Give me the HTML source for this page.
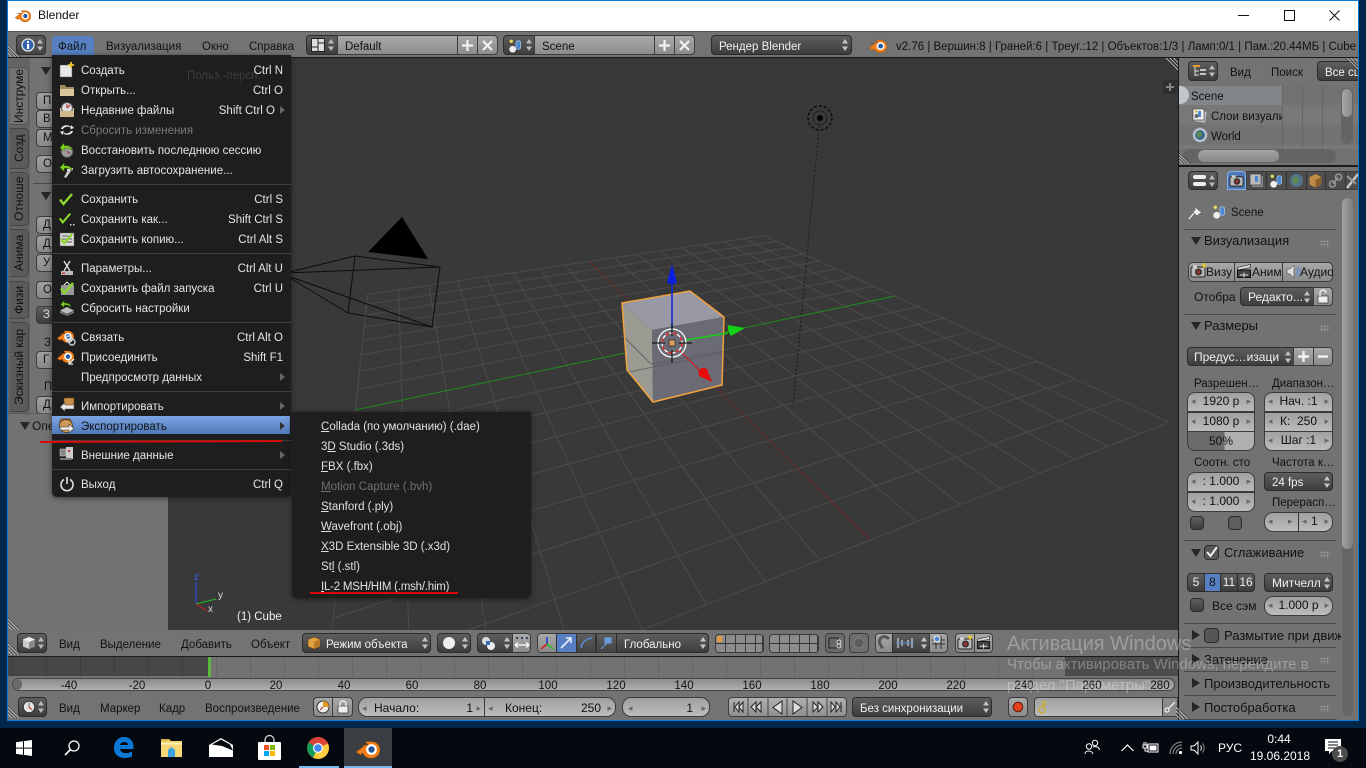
<!DOCTYPE html>
<html><head><meta charset="utf-8"><title>Blender</title>
<style>
html,body{margin:0;padding:0}
body{width:1366px;height:768px;overflow:hidden;background:#00264a;position:relative;font:11.5px "Liberation Sans","DejaVu Sans",sans-serif;color:#111}
.b{position:absolute;box-sizing:border-box}
.t{position:absolute;white-space:nowrap;line-height:18px;height:18px;color:#111}
.t[style*="font-size"]{line-height:14px;height:14px}
.w{color:#f0f0f0}
.lt{position:absolute;box-sizing:border-box;background:linear-gradient(#a8a8a8,#8c8c8c);border:1px solid #3c3c3c}
.dk{position:absolute;box-sizing:border-box;background:linear-gradient(#5e5e5e,#3d3d3d);border:1px solid #2c2c2c;border-radius:4px}
.nf{position:absolute;box-sizing:border-box;background:linear-gradient(#a0a0a0,#bcbcbc);border:1px solid #3c3c3c;text-align:center;line-height:17px;color:#111;white-space:nowrap;font-size:12px}
.nf i{position:absolute;top:0;font-style:normal;font-size:9px;color:#666}
.nf .l{left:3px}.nf .r{right:3px}
svg{position:absolute;overflow:visible}
.sep{position:absolute;height:1px;background:#3f3f3f;left:52px;width:239px}
.psep{position:absolute;height:1px;background:#4a4a4a;left:1184px;width:152px}
.m{position:absolute;left:81px;white-space:nowrap;line-height:20px;color:#e4e4e4}
.s{position:absolute;right:1083px;white-space:nowrap;line-height:20px;color:#e4e4e4}
.arr{position:absolute;left:280px;width:0;height:0;border-left:5px solid #666;border-top:4px solid transparent;border-bottom:4px solid transparent}
.sm{position:absolute;left:321px;white-space:nowrap;line-height:20px;color:#e0e0e0}
.tab{position:absolute;left:10px;width:19px;box-sizing:border-box;background:#5b5b5b;border:1px solid #454545;border-right:0;border-radius:5px 0 0 5px;writing-mode:vertical-rl;transform:rotate(180deg);text-align:center;line-height:18px;color:#111;white-space:nowrap;overflow:hidden;font-size:12px}
.sh{position:absolute;box-sizing:border-box;background:linear-gradient(#a0a0a0,#8a8a8a);border:1px solid #3c3c3c;border-radius:4px;left:36px;width:60px;height:18px;padding-left:6px;line-height:16px}
.tk{position:absolute;top:677px;line-height:18px;color:#111;transform:translateX(-50%)}
.td{position:absolute;width:0;height:0;border-left:5px solid transparent;border-right:5px solid transparent;border-top:8px solid #262626}
.tr{position:absolute;width:0;height:0;border-top:5px solid transparent;border-bottom:5px solid transparent;border-left:8px solid #262626}
</style></head>
<body>
<svg width="0" height="0" style="position:absolute">
<defs>
<symbol id="ud" viewBox="0 0 8 14"><path d="M4 1l3 4.500H1zM4 13L1 8.500h6z" fill="currentColor"/></symbol>
<symbol id="blend" viewBox="0 0 24 24"><path d="M0 16L8 10 2.500 9.500l9.500-.5L9 5.500h7.500a9 8.500 0 1 1-9.800 11.500L4.500 19z" fill="#ef7e18" stroke="#6b3208" stroke-width=".4"/><circle cx="15.500" cy="13.500" r="5.400" fill="#fff"/><circle cx="15.500" cy="13.500" r="3.200" fill="#25569a"/></symbol>
<symbol id="clock" viewBox="0 0 16 16"><circle cx="8" cy="8" r="6.500" fill="#e4e4e4" stroke="#333"/><path d="M8 8l3 3" stroke="#c22" stroke-width="1.300"/><path d="M8 8V3" stroke="#444"/></symbol>
<symbol id="check" viewBox="0 0 16 16"><path d="M2 8.500l3.500 4.500L14 3" fill="none" stroke="#8cd82a" stroke-width="2.400"/></symbol>
<symbol id="greenarrow" viewBox="0 0 16 16"><path d="M1 6l4.500-5v3c4 0 8 .5 9 5.500-2-2.500-5-3-9-3v3.500z" fill="#7fd020" stroke="#2f6a00" stroke-width=".5"/></symbol>
<symbol id="scene" viewBox="0 0 16 16"><circle cx="5" cy="12" r="3.600" fill="#eee"/><rect x="8.500" y="3" width="5" height="9" rx="2" fill="#4a86d4" stroke="#cfe0f5" stroke-width=".6"/><circle cx="3.500" cy="3.500" r="1.800" fill="#e8e060"/></symbol>
<symbol id="cam" viewBox="0 0 16 16"><rect x="1" y="4" width="14" height="10" rx="1.500" fill="#bbb" stroke="#222"/><rect x="3" y="2.500" width="4" height="2" fill="#ddd"/><circle cx="8.500" cy="9" r="3.500" fill="#333"/><circle cx="8.500" cy="9" r="1.800" fill="#a33"/></symbol>
<symbol id="clap" viewBox="0 0 16 16"><rect x="1.500" y="7" width="13" height="7.500" fill="#444" stroke="#111"/><path d="M1.500 4.500l13-3v3l-13 2.500z" fill="#ddd" stroke="#111" stroke-width=".6"/><path d="M4 12h8M8 9.500v5" stroke="#ddd"/></symbol>
<symbol id="hatch" viewBox="0 0 14 14"><path d="M1 0l13 13M5 0l9 9M9 0l5 5" stroke="#d8d8d8" stroke-width="1"/><path d="M0 0l14 14M4 0l10 10M8 0l6 6" stroke="#2a2a2a" stroke-width=".7"/></symbol>
<symbol id="hatchl" viewBox="0 0 14 14"><path d="M0 1l13 13M0 5l9 9M0 9l5 5" stroke="#d8d8d8" stroke-width="1"/><path d="M0 0l14 14M0 4l10 10M0 8l6 6" stroke="#2a2a2a" stroke-width=".7"/></symbol>
</defs></svg>

<!-- window frame -->
<div class="b" style="left:7px;top:0;width:1352px;height:721px;background:#727272;border:1px solid #0a78d4"></div>
<div class="b" style="left:8px;top:1px;width:1350px;height:30px;background:#fff"></div>
<svg style="left:15px;top:7px" width="16" height="16"><use href="#blend" width="16" height="16"/></svg>
<div class="t" style="left:38px;top:8px;font-size:12px;color:#111">Blender</div>
<div class="b" style="left:1238px;top:15px;width:11px;height:1px;background:#111"></div>
<div class="b" style="left:1284px;top:10px;width:11px;height:11px;border:1px solid #111"></div>
<svg style="left:1329px;top:10px" width="11" height="11"><path d="M.5 .5l10 10M10.500 .5l-10 10" stroke="#111"/></svg>

<!-- top header -->
<div class="b" style="left:8px;top:31px;width:1350px;height:26px;background:#737373;border-top:1px solid #555"></div>
<div class="b" style="left:8px;top:57px;width:1350px;height:1px;background:#1a1a1a"></div>
<svg style="left:8px;top:45px" width="12" height="12"><use href="#hatchl" width="12" height="12"/></svg>
<div class="dk" style="left:16px;top:35px;width:30px;height:20px;background:linear-gradient(#5a5a5a,#444)"></div>
<svg style="left:21px;top:38px" width="14" height="14"><circle cx="7" cy="7" r="6" fill="#2f62a8" stroke="#e6e6e6" stroke-width="1.300"/><circle cx="7" cy="4" r="1.200" fill="#fff"/><rect x="6" y="6" width="2.200" height="5" fill="#fff"/></svg>
<svg style="left:36px;top:38px;color:#b9b9b9" width="8" height="14"><use href="#ud" width="8" height="14"/></svg>
<div class="b" style="left:52px;top:36px;width:42px;height:20px;background:#5680c2;border-radius:4px 4px 0 0"></div>
<div class="t" style="left:58px;top:38px">Файл</div>
<div class="t" style="left:106px;top:38px">Визуализация</div>
<div class="t" style="left:202px;top:38px">Окно</div>
<div class="t" style="left:249px;top:38px">Справка</div>

<div class="dk" style="left:306px;top:35px;width:32px;height:20px;border-radius:4px 0 0 4px"></div>
<svg style="left:311px;top:38px" width="14" height="14"><rect x=".5" y=".5" width="13" height="13" fill="#ddd" stroke="#222"/><path d="M7 .5v13M.5 9h6.500M7 5h6.500" stroke="#222"/></svg>
<svg style="left:327px;top:38px;color:#b9b9b9" width="8" height="14"><use href="#ud" width="8" height="14"/></svg>
<div class="lt" style="left:337px;top:35px;width:121px;height:20px"></div>
<div class="t" style="left:345px;top:38px">Default</div>
<div class="lt" style="left:457px;top:35px;width:21px;height:20px"></div>
<div class="lt" style="left:477px;top:35px;width:21px;height:20px;border-radius:0 4px 4px 0"></div>
<svg style="left:462px;top:40px" width="11" height="11"><path d="M5.500 0v11M0 5.500h11" stroke="#f2f2f2" stroke-width="2.200"/></svg>
<svg style="left:482px;top:40px" width="11" height="11"><path d="M1 1l9 9M10 1L1 10" stroke="#f2f2f2" stroke-width="2.200"/></svg>

<div class="dk" style="left:503px;top:35px;width:32px;height:20px;border-radius:4px 0 0 4px"></div>
<svg style="left:508px;top:38px" width="15" height="15"><use href="#scene" width="15" height="15"/></svg>
<svg style="left:525px;top:38px;color:#b9b9b9" width="8" height="14"><use href="#ud" width="8" height="14"/></svg>
<div class="lt" style="left:534px;top:35px;width:121px;height:20px"></div>
<div class="t" style="left:542px;top:38px">Scene</div>
<div class="lt" style="left:654px;top:35px;width:21px;height:20px"></div>
<div class="lt" style="left:674px;top:35px;width:21px;height:20px;border-radius:0 4px 4px 0"></div>
<svg style="left:659px;top:40px" width="11" height="11"><path d="M5.500 0v11M0 5.500h11" stroke="#f2f2f2" stroke-width="2.200"/></svg>
<svg style="left:679px;top:40px" width="11" height="11"><path d="M1 1l9 9M10 1L1 10" stroke="#f2f2f2" stroke-width="2.200"/></svg>

<div class="dk" style="left:711px;top:35px;width:141px;height:20px"></div>
<div class="t w" style="left:719px;top:38px">Рендер Blender</div>
<svg style="left:841px;top:38px;color:#c4c4c4" width="8" height="14"><use href="#ud" width="8" height="14"/></svg>

<svg style="left:869px;top:36px" width="18" height="18"><use href="#blend" width="18" height="18"/></svg>
<div class="t" style="left:896px;top:38px;width:462px;overflow:hidden">v2.76 | Вершин:8 | Граней:6 | Треуг.:12 | Объектов:1/3 | Ламп:0/1 | Пам.:20.44МБ | Cube</div>

<!-- 3D viewport -->
<div class="b" style="left:168px;top:58px;width:1010px;height:575px;background:#393939"></div>
<svg style="left:168px;top:58px" width="1010" height="575" viewBox="168 58 1010 575">
 <defs><clipPath id="vc"><rect x="168" y="58" width="1010" height="575"/></clipPath></defs>
 <g clip-path="url(#vc)">
  <g id="grid" stroke="#4b4b4b" stroke-width="1"></g>
  <path d="M590 262L870 540" stroke="#642a2a" stroke-width="1"/>
  <path d="M355 410L895 296" stroke="#1f8a1f" stroke-width="1"/>
  <!-- lamp -->
  <path d="M820 118L793 405" stroke="#1c1c1c" stroke-width="1" stroke-dasharray="2 2"/>
  <circle cx="820" cy="118" r="12" fill="none" stroke="#0c0c0c" stroke-width="1.500" stroke-dasharray="3 2"/>
  <circle cx="820" cy="118" r="7" fill="none" stroke="#222"/>
  <circle cx="820" cy="118" r="3" fill="#000"/>
  <!-- camera -->
  <path d="M402 217L368 252L428 259z" fill="#000"/>
  <path d="M285 273L355 256L440 267L432 327L348 313L355 256M285 273L440 267M285 275L348 313M285 275L432 327" fill="none" stroke="#0c0c0c"/>
  <!-- cube -->
  <path d="M622 303L690 291L724 317L652 330z" fill="#9999a6"/>
  <path d="M622 303L652 330L653 402L627 370z" fill="#9b9b93"/>
  <path d="M652 330L724 317L722 385L653 402z" fill="#6b6b76"/>
  <path d="M625 338L651 364M629 372L722 353M651 364L723 351" stroke="#5a5a60" fill="none" stroke-width=".8"/>
  <path d="M622 303L690 291L724 317L722 385L653 402L627 370z" fill="none" stroke="#f2a33c" stroke-width="1.500"/>
  <!-- gizmo -->
  <path d="M672 283V330" stroke="#0a24d8" stroke-width="1.500"/>
  <path d="M672 264L677 283Q672 285 667 283z" fill="#0c1ee0"/>
  <path d="M686 340L728 333" stroke="#12d012" stroke-width="1.500"/>
  <path d="M745 328L728 325Q727 331 731 336z" fill="#12d012"/>
  <path d="M680 351L702 373" stroke="#e01010" stroke-width="1"/>
  <path d="M712 382L699 376Q697 369 703 368Q708 368 708 372z" fill="#e60a0a"/>
  <!-- 3d cursor -->
  <circle cx="672" cy="343" r="14" fill="none" stroke="#fff" stroke-width="1.300"/>
  <circle cx="672" cy="343" r="10" fill="none" stroke="#f22" stroke-width="1.300" stroke-dasharray="4 4"/>
  <circle cx="672" cy="343" r="10" fill="none" stroke="#fff" stroke-width="1.300" stroke-dasharray="4 4" stroke-dashoffset="4"/>
  <path d="M652 343H665M679 343H692M672 323V336M672 350V363" stroke="#000" stroke-width="1"/>
  <rect x="669" y="340" width="6" height="6" fill="#e0a060" stroke="#222" stroke-width=".7"/>
  <!-- mini axis -->
  <path d="M196 604V582" stroke="#2a50ff"/><path d="M196 604L216 599" stroke="#21c021"/><path d="M196 604L207 611" stroke="#d02020"/>
  <text x="194" y="580" font-family="Liberation Sans" font-size="10" fill="#3060ff">z</text>
  <text x="218" y="598" font-family="Liberation Sans" font-size="10" fill="#dcdcdc">y</text>
  <text x="208" y="612" font-family="Liberation Sans" font-size="10" fill="#dcdcdc">x</text>
 </g>
</svg>
<div class="t" style="left:237px;top:608px;color:#f0f0f0">(1) Cube</div>
<div class="b" style="left:1163px;top:80px;width:15px;height:14px;background:#2f2f2f;border-radius:3px 0 0 3px"></div>
<svg style="left:1166px;top:83px" width="8" height="8"><path d="M4 0v8M0 4h8" stroke="#888" stroke-width="2"/></svg>
<svg style="left:1165px;top:58px" width="13" height="13"><use href="#hatch" width="13" height="13"/></svg>

<!-- tool shelf -->
<div class="b" style="left:8px;top:58px;width:160px;height:575px;background:#727272"></div>
<div class="b" style="left:8px;top:58px;width:22px;height:356px;background:#646464"></div>
<div class="tab" style="top:67px;height:58px;background:#727272;border-color:#555">Инструме</div>
<div class="tab" style="top:128px;height:41px">Созд</div>
<div class="tab" style="top:172px;height:54px">Отноше</div>
<div class="tab" style="top:229px;height:48px">Анима</div>
<div class="tab" style="top:281px;height:38px">Физи</div>
<div class="tab" style="top:322px;height:90px">Эскизный кар</div>
<div class="td" style="left:41px;top:67px"></div>
<div class="sh" style="top:92px">П</div><div class="sh" style="top:110px">В</div><div class="sh" style="top:129px">М</div>
<div class="sh" style="top:155px">О</div>
<div class="b" style="left:33px;top:183px;width:30px;height:1px;background:#4a4a4a"></div>
<div class="td" style="left:41px;top:192px"></div>
<div class="sh" style="top:216px">Д</div><div class="sh" style="top:235px">Д</div><div class="sh" style="top:254px">У</div>
<div class="sh" style="top:281px">О</div>
<div class="sh" style="top:306px;background:linear-gradient(#5e5e5e,#3d3d3d);color:#ddd">З</div>
<div class="t" style="left:44px;top:334px">З</div>
<div class="sh" style="top:351px">Г</div>
<div class="t" style="left:44px;top:378px">П</div>
<div class="sh" style="top:396px">Д</div>
<div class="b" style="left:8px;top:413px;width:160px;height:1px;background:#5a5a5a"></div>
<div class="td" style="left:20px;top:422px"></div>
<div class="t" style="left:32px;top:419px;font-size:12px">Опе</div>
<svg style="left:8px;top:618px" width="12" height="12"><use href="#hatchl" width="12" height="12"/></svg>

<!-- menu -->
<div class="b" style="left:52px;top:55px;width:239px;height:442px;background:#1e1e1e;border-radius:0 0 5px 5px;box-shadow:0 1px 6px rgba(0,0,0,.5)"></div>
<div class="t" style="left:187px;top:67px;color:#3f3f3f">Польз.-персп.</div>
<div class="sep" style="top:184px"></div><div class="sep" style="top:253px"></div><div class="sep" style="top:322px"></div><div class="sep" style="top:391px"></div><div class="sep" style="top:440px"></div><div class="sep" style="top:469px"></div>
<div class="b" style="left:52px;top:416px;width:238px;height:18px;background:linear-gradient(#7ca5e6,#4f78b6)"></div>

<div class="m" style="top:61px">Создать</div><div class="s" style="top:61px">Ctrl N</div>
<div class="m" style="top:81px">Открыть...</div><div class="s" style="top:81px">Ctrl O</div>
<div class="m" style="top:101px">Недавние файлы</div><div class="s" style="top:101px;right:1091px">Shift Ctrl O</div><div class="arr" style="top:106px"></div>
<div class="m" style="top:121px;color:#7a7a7a">Сбросить изменения</div>
<div class="m" style="top:141px">Восстановить последнюю сессию</div>
<div class="m" style="top:161px">Загрузить автосохранение...</div>
<div class="m" style="top:190px">Сохранить</div><div class="s" style="top:190px">Ctrl S</div>
<div class="m" style="top:210px">Сохранить как...</div><div class="s" style="top:210px">Shift Ctrl S</div>
<div class="m" style="top:230px">Сохранить копию...</div><div class="s" style="top:230px">Ctrl Alt S</div>
<div class="m" style="top:259px">Параметры...</div><div class="s" style="top:259px">Ctrl Alt U</div>
<div class="m" style="top:279px">Сохранить файл запуска</div><div class="s" style="top:279px">Ctrl U</div>
<div class="m" style="top:299px">Сбросить настройки</div>
<div class="m" style="top:328px">Связать</div><div class="s" style="top:328px">Ctrl Alt O</div>
<div class="m" style="top:348px">Присоединить</div><div class="s" style="top:348px">Shift F1</div>
<div class="m" style="top:368px">Предпросмотр данных</div><div class="arr" style="top:373px"></div>
<div class="m" style="top:397px">Импортировать</div><div class="arr" style="top:402px"></div>
<div class="m" style="top:417px;color:#111">Экспортировать</div><div class="arr" style="top:422px;border-left-color:#333"></div>
<div class="m" style="top:446px">Внешние данные</div><div class="arr" style="top:451px"></div>
<div class="m" style="top:475px">Выход</div><div class="s" style="top:475px">Ctrl Q</div>

<!-- menu icons -->
<svg style="left:59px;top:62px" width="16" height="16"><path d="M1 3h9l3 3v9H1z" fill="#e8e8e8" stroke="#555" stroke-width=".5"/><path d="M12 0v6M9 3h6" stroke="#f0c828" stroke-width="1.800"/></svg>
<svg style="left:59px;top:82px" width="16" height="16"><path d="M1 3h5l1 2h8v9H1z" fill="#a08c5e"/><path d="M1 7h14v7H1z" fill="#d8c69a"/></svg>
<svg style="left:59px;top:102px" width="16" height="16"><path d="M1 6h14v9H1z" fill="#d8c69a"/><circle cx="8" cy="6" r="5.500" fill="#ddd" stroke="#555"/><path d="M8 6l3-3M8 6V2" stroke="#a22"/><path d="M1 9h14v6H1z" fill="#cdb98b"/></svg>
<svg style="left:59px;top:122px" width="16" height="16"><path d="M2 7c1-4 7-5 10-2V3l3 3-4 1.500 1-1.500c-2-2-6-2-8 1zM14 9c-1 4-7 5-10 2v2l-3-3 4-1.500L4 10c2 2 6 2 8-1z" fill="#eee"/></svg>
<svg style="left:59px;top:142px" width="16" height="16"><circle cx="8" cy="9.500" r="6" fill="#9a9a9a" stroke="#444"/><path d="M8 9.500l3 2" stroke="#a22"/><use href="#greenarrow" width="15" height="15"/></svg>
<svg style="left:59px;top:162px" width="16" height="16"><path d="M5 15l4-7 3 1-5 7z" fill="#ccc"/><path d="M8 8l6-1" stroke="#ddd" stroke-width="2"/><use href="#greenarrow" width="15" height="15"/></svg>
<svg style="left:58px;top:191px" width="16" height="16"><use href="#check" width="16" height="16"/></svg>
<svg style="left:58px;top:211px" width="16" height="16"><use href="#check" width="14" height="14"/><path d="M12 13h1.500v1.500H12zM15 13h1.500v1.500H15z" fill="#ddd"/></svg>
<svg style="left:59px;top:231px" width="16" height="16"><rect x="1" y="2" width="14" height="13" fill="#ddd" stroke="#555" stroke-width=".5"/><path d="M3 5h10M3 8h10M3 11h10" stroke="#555"/><use href="#check" width="15" height="15"/></svg>
<svg style="left:59px;top:260px" width="16" height="16"><rect x="2" y="11" width="12" height="4" fill="#bbb"/><path d="M5 1l3 5 3-5M5 11l3-5 3 5" fill="none" stroke="#ddd" stroke-width="1.400"/><rect x="3" y="12.500" width="3" height="1.300" fill="#c33"/></svg>
<svg style="left:59px;top:280px" width="16" height="16"><rect x="2" y="5" width="13" height="10" fill="#999"/><path d="M5 5l3-3 3 3" fill="none" stroke="#ddd"/><use href="#check" width="16" height="16"/></svg>
<svg style="left:59px;top:300px" width="16" height="16"><path d="M8 7l7 3.500-7 3.500-7-3.500z" fill="#bbb"/><path d="M1 11l7 3.500L15 11v2l-7 3-7-3z" fill="#777"/><use href="#greenarrow" width="14" height="12"/></svg>
<svg style="left:57px;top:327px" width="19" height="19"><use href="#blend" width="17" height="17"/><circle cx="12" cy="12" r="3" fill="none" stroke="#ddd" stroke-width="1.400"/><circle cx="15" cy="15" r="3" fill="none" stroke="#bcd" stroke-width="1.400"/></svg>
<svg style="left:57px;top:347px" width="19" height="19"><use href="#blend" width="17" height="17"/><path d="M17 12l-5 5M12 13v4h4" fill="none" stroke="#eee" stroke-width="1.300"/></svg>
<svg style="left:59px;top:397px" width="16" height="16"><rect x="5" y="1" width="10" height="10" fill="#c98f4a" stroke="#6b4312" stroke-width=".6"/><path d="M15 8H6V5.500L1 10l5 4.500V12h9z" fill="#e8e8e8" stroke="#444" stroke-width=".6"/></svg>
<svg style="left:58px;top:417px" width="18" height="18"><rect x="2" y="2" width="11" height="10" rx="2" fill="#c98f4a" stroke="#4d2e08" stroke-width=".7"/><circle cx="8" cy="9" r="6.500" fill="#ce9a5a" stroke="#4d2e08" stroke-width=".7"/><path d="M2 10h9V7l5 4.500L11 16v-3H2z" fill="#eee" stroke="#333" stroke-width=".6"/></svg>
<svg style="left:59px;top:446px" width="16" height="16"><rect x="1" y="3" width="6" height="7" fill="#888" stroke="#ccc" stroke-width=".5"/><rect x="7" y="1" width="7" height="12" fill="#ccc"/><path d="M1 12h12v2H1z" fill="#777"/><circle cx="10" cy="5" r="1.200" fill="#c33"/></svg>
<svg style="left:59px;top:476px" width="16" height="16"><path d="M5 3.500a6 6 0 1 0 6 0" fill="none" stroke="#ddd" stroke-width="1.600"/><path d="M8 1v7" stroke="#ddd" stroke-width="1.600"/></svg>

<!-- submenu -->
<div class="b" style="left:292px;top:412px;width:239px;height:186px;background:#1e1e1e;border-radius:0 0 5px 5px;box-shadow:0 1px 6px rgba(0,0,0,.5)"></div>
<div class="sm" style="top:417px"><u>C</u>ollada (по умолчанию) (.dae)</div>
<div class="sm" style="top:437px">3<u>D</u> Studio (.3ds)</div>
<div class="sm" style="top:457px"><u>F</u>BX (.fbx)</div>
<div class="sm" style="top:477px;color:#707070"><u>M</u>otion Capture (.bvh)</div>
<div class="sm" style="top:497px"><u>S</u>tanford (.ply)</div>
<div class="sm" style="top:517px"><u>W</u>avefront (.obj)</div>
<div class="sm" style="top:537px"><u>X</u>3D Extensible 3D (.x3d)</div>
<div class="sm" style="top:557px">St<u>l</u> (.stl)</div>
<div class="sm" style="top:577px;letter-spacing:-.22px"><u>I</u>L-2 MSH/HIM (.msh/.him)</div>
<!-- red marks -->
<svg style="left:0;top:0" width="600" height="620"><path d="M40 442L282 441" stroke="#d80a0a" stroke-width="2"/><path d="M310 593L458 593" stroke="#d80a0a" stroke-width="2"/></svg>

<!-- viewport header -->
<div class="b" style="left:8px;top:630px;width:1170px;height:26px;background:#737373"></div>
<div class="b" style="left:8px;top:656px;width:1170px;height:1px;background:#1a1a1a"></div>
<svg style="left:8px;top:643px" width="12" height="12"><use href="#hatchl" width="12" height="12"/></svg>
<div class="dk" style="left:17px;top:633px;width:30px;height:20px"></div>
<svg style="left:22px;top:636px" width="14" height="14"><path d="M7 1l6 2.500v7L7 13 1 10.500v-7z" fill="#ccc"/><path d="M7 6l6-2.500v7L7 13z" fill="#888"/><path d="M1 3.500L7 1l6 2.500L7 6z" fill="#eee"/></svg>
<svg style="left:37px;top:636px;color:#b9b9b9" width="8" height="14"><use href="#ud" width="8" height="14"/></svg>
<div class="t" style="left:59px;top:636px">Вид</div>
<div class="t" style="left:100px;top:636px">Выделение</div>
<div class="t" style="left:181px;top:636px">Добавить</div>
<div class="t" style="left:251px;top:636px">Объект</div>
<div class="dk" style="left:302px;top:633px;width:129px;height:20px"></div>
<svg style="left:307px;top:636px" width="14" height="14"><path d="M7 1l6 2.500v7L7 13 1 10.500v-7z" fill="#e0a040" stroke="#5b3b0d" stroke-width=".5"/><path d="M7 6l6-2.500v7L7 13z" fill="#b9782a"/></svg>
<div class="t w" style="left:326px;top:636px">Режим объекта</div>
<svg style="left:421px;top:636px;color:#c4c4c4" width="8" height="14"><use href="#ud" width="8" height="14"/></svg>
<div class="dk" style="left:437px;top:633px;width:34px;height:20px"></div>
<svg style="left:442px;top:636px" width="14" height="14"><circle cx="7" cy="7" r="6" fill="#eee"/></svg>
<svg style="left:461px;top:636px;color:#c4c4c4" width="8" height="14"><use href="#ud" width="8" height="14"/></svg>
<div class="dk" style="left:477px;top:633px;width:36px;height:20px;border-radius:4px 0 0 4px"></div>
<svg style="left:481px;top:636px" width="15" height="15"><circle cx="5" cy="5" r="4" fill="#ddd"/><circle cx="10" cy="10" r="4" fill="#eee"/><rect x="5" y="5" width="4" height="4" fill="#3a6bc0"/></svg>
<svg style="left:503px;top:636px;color:#c4c4c4" width="8" height="14"><use href="#ud" width="8" height="14"/></svg>
<div class="lt" style="left:512px;top:633px;width:19px;height:20px;border-radius:0 4px 4px 0"></div>
<svg style="left:514px;top:636px" width="16" height="14"><path d="M2 1h2v2H2zM7 1h2v2H7zM12 1h2v2h-2z" fill="#345"/><path d="M1 9h14M1 9l3-2.500M1 9l3 2.500M15 9l-3-2.500M15 9l-3 2.500" stroke="#fff" fill="none" stroke-width="1.200"/></svg>

<div class="lt" style="left:537px;top:633px;width:20px;height:20px;border-radius:4px 0 0 4px"></div>
<svg style="left:539px;top:636px" width="16" height="15"><path d="M8 8V1" stroke="#1b3fd0" stroke-width="1.600"/><path d="M8 8l-6 5" stroke="#d02020" stroke-width="1.600"/><path d="M8 8l6 5" stroke="#22c022" stroke-width="1.600"/></svg>
<div class="b" style="left:556px;top:633px;width:21px;height:20px;background:#5680c2;border:1px solid #333"></div>
<svg style="left:559px;top:636px" width="14" height="14"><path d="M2 12L11 3M7 2h5v5" stroke="#eef" fill="none" stroke-width="1.600"/></svg>
<div class="b" style="left:576px;top:633px;width:20px;height:20px;background:linear-gradient(#5e5e5e,#444);border:1px solid #333"></div>
<svg style="left:579px;top:636px" width="14" height="14"><path d="M2 12C3 6 7 3 13 2" stroke="#5a8ad0" fill="none" stroke-width="1.600"/></svg>
<div class="b" style="left:596px;top:633px;width:21px;height:20px;background:linear-gradient(#5e5e5e,#444);border:1px solid #333"></div>
<svg style="left:599px;top:636px" width="14" height="14"><path d="M2 13l6-6M6 2h6v5H6z" stroke="#6a9ade" fill="#6a9ade" stroke-width="1.200"/></svg>
<div class="dk" style="left:616px;top:633px;width:93px;height:20px;border-radius:0 4px 4px 0"></div>
<div class="t w" style="left:624px;top:636px">Глобально</div>
<svg style="left:699px;top:636px;color:#c4c4c4" width="8" height="14"><use href="#ud" width="8" height="14"/></svg>
<div class="b" style="left:715px;top:634px;width:49px;height:19px;border:1px solid #3a3a3a;border-radius:4px;background:linear-gradient(#333,#333) 0 8px/100% 1px no-repeat,repeating-linear-gradient(90deg,#3a3a3a 0 1px,transparent 1px 10px) -1px 0,#8c8c8c"></div>
<div class="b" style="left:717px;top:636px;width:5px;height:6px;background:#e09a40"></div>
<div class="b" style="left:769px;top:634px;width:50px;height:19px;border:1px solid #3a3a3a;border-radius:4px;background:linear-gradient(#333,#333) 0 8px/100% 1px no-repeat,repeating-linear-gradient(90deg,#3a3a3a 0 1px,transparent 1px 10px) -1px 0,#8c8c8c"></div>
<div class="lt" style="left:825px;top:633px;width:20px;height:20px;border-radius:4px;background:#6a6a6a"></div>
<svg style="left:828px;top:637px" width="15" height="13"><rect x="1" y="1" width="9" height="10" fill="none" stroke="#222"/><circle cx="11" cy="5" r="2" fill="none" stroke="#ddd"/><circle cx="11" cy="9" r="2" fill="none" stroke="#ddd"/></svg>
<div class="lt" style="left:849px;top:633px;width:20px;height:20px;border-radius:4px;background:#6e6e6e"></div>
<svg style="left:853px;top:637px" width="12" height="12"><circle cx="6" cy="6" r="5" fill="#5c5c5c" stroke="#7e7e7e"/></svg>
<div class="lt" style="left:875px;top:633px;width:18px;height:20px;border-radius:4px 0 0 4px"></div>
<svg style="left:877px;top:636px" width="14" height="14"><path d="M3 11V6a5 5 0 0 1 10 0" fill="none" stroke="#555" stroke-width="3" transform="rotate(-30 7 7)"/></svg>
<div class="dk" style="left:892px;top:633px;width:38px;height:20px;border-radius:0"></div>
<svg style="left:896px;top:637px" width="18" height="12"><path d="M2 1v10M6 3v6M12 3v6M16 1v10" stroke="#bcd" stroke-width="1.300"/><path d="M0 6h18" stroke="#5b8bd0"/></svg>
<svg style="left:920px;top:636px;color:#c4c4c4" width="8" height="14"><use href="#ud" width="8" height="14"/></svg>
<div class="lt" style="left:929px;top:633px;width:19px;height:20px;border-radius:0 4px 4px 0"></div>
<svg style="left:931px;top:635px" width="15" height="15"><path d="M1 5h13M1 9h13M5 1v13M10 1v13" stroke="#333"/><circle cx="6" cy="4" r="3" fill="#4a86d4" stroke="#fff"/></svg>
<div class="lt" style="left:955px;top:633px;width:20px;height:20px;border-radius:4px 0 0 4px"></div>
<svg style="left:957px;top:635px" width="16" height="16"><use href="#cam" width="16" height="16"/><path d="M13 0v5M10.500 2.500h5" stroke="#f0c828" stroke-width="1.500"/></svg>
<div class="lt" style="left:974px;top:633px;width:19px;height:20px;border-radius:0 4px 4px 0"></div>
<svg style="left:976px;top:635px" width="15" height="15"><use href="#clap" width="15" height="15"/></svg>

<!-- timeline -->
<div class="b" style="left:8px;top:657px;width:1170px;height:20px;background:repeating-linear-gradient(90deg,#666 0 1px,transparent 1px 34px) 4px 0,#727272"></div>
<div class="b" style="left:8px;top:657px;width:200px;height:19px;background:repeating-linear-gradient(90deg,#3d3d3d 0 1px,transparent 1px 34px) 4px 0,#474747"></div>
<div class="b" style="left:1065px;top:657px;width:113px;height:19px;background:#4c4c4c"></div>
<div class="b" style="left:208px;top:657px;width:3px;height:20px;background:#5cb83c"></div>
<div class="b" style="left:12px;top:678px;width:1163px;height:13px;border-radius:7px;border:1px solid #444;background:linear-gradient(#8c8c8c,#b0b0b0)"></div>
<div class="b" style="left:13px;top:679px;width:9px;height:11px;border-radius:6px;background:#6a6a6a"></div>
<div class="tk" style="left:69px">-40</div><div class="tk" style="left:137px">-20</div><div class="tk" style="left:208px">0</div><div class="tk" style="left:276px">20</div><div class="tk" style="left:344px">40</div><div class="tk" style="left:412px">60</div><div class="tk" style="left:480px">80</div><div class="tk" style="left:548px">100</div><div class="tk" style="left:616px">120</div><div class="tk" style="left:684px">140</div><div class="tk" style="left:752px">160</div><div class="tk" style="left:820px">180</div><div class="tk" style="left:888px">200</div><div class="tk" style="left:956px">220</div><div class="tk" style="left:1024px">240</div><div class="tk" style="left:1092px">260</div><div class="tk" style="left:1160px">280</div>

<!-- timeline header -->
<div class="b" style="left:8px;top:691px;width:1170px;height:29px;background:#737373"></div>
<svg style="left:8px;top:706px" width="12" height="12"><use href="#hatchl" width="12" height="12"/></svg>
<div class="dk" style="left:18px;top:697px;width:29px;height:20px"></div>
<svg style="left:22px;top:700px" width="14" height="14"><use href="#clock" width="14" height="14"/></svg>
<svg style="left:37px;top:700px;color:#b9b9b9" width="8" height="14"><use href="#ud" width="8" height="14"/></svg>
<div class="t" style="left:59px;top:700px">Вид</div>
<div class="t" style="left:100px;top:700px">Маркер</div>
<div class="t" style="left:159px;top:700px">Кадр</div>
<div class="t" style="left:205px;top:700px">Воспроизведение</div>
<div class="lt" style="left:313px;top:697px;width:20px;height:20px;border-radius:4px 0 0 4px"></div>
<svg style="left:316px;top:700px" width="14" height="14"><circle cx="7" cy="7" r="6" fill="#eee" stroke="#333"/><path d="M7 7V1a6 6 0 0 1 6 6z" fill="#e89a20"/><path d="M7 7l-3 3" stroke="#a22"/></svg>
<div class="lt" style="left:332px;top:697px;width:21px;height:20px;border-radius:0 4px 4px 0"></div>
<svg style="left:337px;top:700px" width="12" height="14"><rect x="1" y="6" width="10" height="7" fill="#eee" stroke="#333" stroke-width=".7"/><path d="M3 6V4a3 3 0 0 1 6 0v2" fill="none" stroke="#eee" stroke-width="1.400"/></svg>
<div class="nf" style="left:358px;top:697px;width:127px;height:20px;border-radius:9px 0 0 9px;text-align:left;padding-left:15px;line-height:20px">Начало:<span style="position:absolute;right:11px">1</span><i class="l">◂</i><i class="r">▸</i></div>
<div class="nf" style="left:484px;top:697px;width:132px;height:20px;border-radius:0 9px 9px 0;text-align:left;padding-left:20px;line-height:20px">Конец:<span style="position:absolute;right:14px">250</span><i class="l">◂</i><i class="r">▸</i></div>
<div class="nf" style="left:622px;top:697px;width:88px;height:20px;border-radius:9px;line-height:20px;text-align:right;padding-right:16px">1<i class="l" style="left:5px">◂</i><i class="r">▸</i></div>
<div class="lt" style="left:728px;top:697px;width:119px;height:20px;border-radius:4px;background:linear-gradient(#b0b0b0,#909090)"></div>
<svg style="left:728px;top:697px" width="119" height="20"><path d="M20 0v20M40 0v20M59 0v20M79 0v20M99 0v20" stroke="#444"/><g fill="#ddd" stroke="#222"><path d="M6 5v10M15 5v10l-4-5zM11 5v10l-4-5z" /><path d="M33 5v10l-5-5zM28 5v10l-5-5z"/><path d="M54 4v13l-9-6.500z"/><path d="M65 4v13l9-6.500z"/><path d="M85 5v10l5-5zM90 5v10l5-5z"/><path d="M113 5v10M103 5v10l4-5zM108 5v10l4-5z"/></g></svg>
<div class="dk" style="left:852px;top:697px;width:140px;height:20px"></div>
<div class="t w" style="left:860px;top:700px">Без синхронизации</div>
<svg style="left:982px;top:700px;color:#c4c4c4" width="8" height="14"><use href="#ud" width="8" height="14"/></svg>
<div class="lt" style="left:1008px;top:697px;width:20px;height:20px;border-radius:4px"></div>
<svg style="left:1012px;top:701px" width="12" height="12"><circle cx="6" cy="6" r="4.800" fill="#e0401a" stroke="#5a1a08"/></svg>
<div class="lt" style="left:1034px;top:697px;width:129px;height:20px;border-radius:4px 0 0 4px;background:linear-gradient(#a0a0a0,#bcbcbc)"></div>
<svg style="left:1037px;top:699px" width="16" height="16"><circle cx="5" cy="11" r="3" fill="none" stroke="#c9b040" stroke-width="1.600"/><path d="M6 9V2M6 3h4M6 6h3" stroke="#c9b040" stroke-width="1.600" fill="none"/></svg>
<div class="lt" style="left:1162px;top:697px;width:16px;height:20px;background:#8a8a8a"></div>
<svg style="left:1164px;top:701px" width="12" height="12"><circle cx="3" cy="9" r="2" fill="none" stroke="#eee" stroke-width="1.300"/><path d="M4.500 7.500L11 1" stroke="#eee" stroke-width="1.300"/></svg>

<!-- outliner -->
<div class="b" style="left:1178px;top:58px;width:1px;height:662px;background:#1a1a1a"></div>
<div class="b" style="left:1179px;top:58px;width:179px;height:27px;background:#737373"></div>
<div class="dk" style="left:1188px;top:61px;width:30px;height:20px"></div>
<svg style="left:1192px;top:64px" width="15" height="14"><path d="M1 1h7v2H1z" fill="#e09a30"/><path d="M3 3v9M3 7h4M3 11h4" stroke="#ddd"/><path d="M8 6h6M8 10h6" stroke="#eee" stroke-width="1.600"/></svg>
<svg style="left:1208px;top:64px;color:#b9b9b9" width="8" height="14"><use href="#ud" width="8" height="14"/></svg>
<div class="t" style="left:1230px;top:64px">Вид</div>
<div class="t" style="left:1271px;top:64px">Поиск</div>
<div class="dk" style="left:1317px;top:61px;width:41px;height:20px;border-right:0;border-radius:4px 0 0 4px"></div>
<div class="t w" style="left:1325px;top:64px;width:33px;overflow:hidden">Все сцены</div>
<div class="b" style="left:1179px;top:85px;width:179px;height:81px;background:#727272"></div>
<div class="b" style="left:1179px;top:105px;width:179px;height:20px;background:#787878"></div>
<div class="b" style="left:1179px;top:145px;width:179px;height:4px;background:#787878"></div>
<div class="b" style="left:1179px;top:86px;width:103px;height:19px;background:#80868a"></div>
<div class="b" style="left:1179px;top:86px;width:10px;height:18px;background:#c0c6ca;border-radius:0 9px 9px 0"></div>
<div class="b" style="left:1282px;top:85px;width:1px;height:64px;background:#666"></div><div class="b" style="left:1302px;top:85px;width:1px;height:64px;background:#666"></div><div class="b" style="left:1322px;top:85px;width:1px;height:64px;background:#666"></div>
<div class="t" style="left:1191px;top:88px">Scene</div>
<svg style="left:1192px;top:108px" width="15" height="15"><rect x="3" y="3" width="11" height="11" fill="#bbb" transform="rotate(8 8 8)"/><rect x="1" y="1" width="11" height="11" fill="#eee" stroke="#333" stroke-width=".6"/><rect x="6" y="3" width="3" height="6" fill="#4a86d4"/><circle cx="4.500" cy="8" r="2" fill="#666"/><circle cx="4" cy="3.500" r="1.200" fill="#c9b040"/></svg>
<div class="t" style="left:1211px;top:108px;width:71px;overflow:hidden">Слои визуализации</div>
<svg style="left:1192px;top:127px" width="16" height="16"><circle cx="8" cy="8" r="7" fill="#c8ced8" stroke="#9a9fb0"/><circle cx="8" cy="8" r="5" fill="#3a6a90"/><path d="M5 5c2-1 5 0 5 2s-2 2-3 4c-2 0-3-3-2-6z" fill="#5c8a4a"/></svg>
<div class="t" style="left:1211px;top:128px">World</div>
<div class="b" style="left:1183px;top:149px;width:153px;height:14px;border-radius:7px;background:#646464"></div>
<div class="b" style="left:1198px;top:150px;width:81px;height:12px;border-radius:6px;background:linear-gradient(#a4a4a4,#888)"></div>
<div class="b" style="left:1341px;top:88px;width:12px;height:56px;border-radius:6px;background:#646464"></div>
<div class="b" style="left:1342px;top:89px;width:10px;height:28px;border-radius:5px;background:linear-gradient(90deg,#a8a8a8,#8a8a8a)"></div>
<div class="b" style="left:1179px;top:165px;width:179px;height:2px;background:#1a1a1a"></div>
<svg style="left:1346px;top:58px" width="12" height="12"><use href="#hatch" width="12" height="12"/></svg>
<svg style="left:1179px;top:153px" width="11" height="11"><use href="#hatchl" width="11" height="11"/></svg>

<!-- properties -->
<div class="b" style="left:1179px;top:167px;width:179px;height:553px;background:#727272"></div>
<div class="dk" style="left:1188px;top:171px;width:30px;height:19px"></div>
<svg style="left:1192px;top:174px" width="15" height="13"><rect x="1" y="1" width="13" height="4" rx="2" fill="#eee"/><rect x="1" y="8" width="13" height="4" rx="2" fill="#eee"/></svg>
<svg style="left:1208px;top:174px;color:#b9b9b9" width="8" height="14"><use href="#ud" width="8" height="14"/></svg>
<div class="b" style="left:1227px;top:171px;width:19px;height:19px;background:#4d77b5;border:1px solid #82aee8;border-radius:4px 4px 0 0"></div>
<div class="b" style="left:1246px;top:171px;width:112px;height:19px;background:#4d4d4d;border:1px solid #3a3a3a;border-right:0"></div>
<div class="b" style="left:1266px;top:171px;width:1px;height:19px;background:#333"></div><div class="b" style="left:1286px;top:171px;width:1px;height:19px;background:#333"></div><div class="b" style="left:1306px;top:171px;width:1px;height:19px;background:#333"></div><div class="b" style="left:1325px;top:171px;width:1px;height:19px;background:#333"></div><div class="b" style="left:1345px;top:171px;width:1px;height:19px;background:#333"></div>
<svg style="left:1229px;top:173px" width="15" height="15"><use href="#cam" width="15" height="15"/></svg>
<svg style="left:1249px;top:173px" width="15" height="15"><rect x="3" y="3" width="11" height="11" fill="#888"/><rect x="1" y="1" width="11" height="11" fill="#bbb" stroke="#333" stroke-width=".6"/><rect x="6" y="3" width="3" height="6" fill="#4a86d4"/></svg>
<svg style="left:1269px;top:173px" width="15" height="15"><use href="#scene" width="15" height="15"/></svg>
<svg style="left:1289px;top:173px" width="15" height="15"><circle cx="7.500" cy="7.500" r="6.500" fill="#54738c"/><path d="M4 4c3-1 6 0 6 3s-3 3-4 5c-2-1-3-4-2-8z" fill="#5f8a55"/></svg>
<svg style="left:1308px;top:173px" width="15" height="15"><path d="M7.500 1l6 3v7.500l-6 3-6-3V4z" fill="#c08a48"/><path d="M7.500 7l6-3v7.500l-6 3z" fill="#8d5f28"/></svg>
<svg style="left:1328px;top:173px" width="15" height="15"><path d="M5 11l5-7" stroke="#999" stroke-width="1.500"/><circle cx="4.500" cy="11" r="3" fill="none" stroke="#999" stroke-width="1.500"/><circle cx="10.500" cy="4" r="3" fill="none" stroke="#999" stroke-width="1.500"/></svg>
<svg style="left:1347px;top:171px" width="11" height="19"><path d="M0 17L11 3" stroke="#c8c8c8" stroke-width="2.500"/><path d="M0 5l9 8" stroke="#999" stroke-width="2"/></svg>

<div class="b" style="left:1342px;top:198px;width:11px;height:518px;border-radius:6px;background:#666"></div>
<div class="b" style="left:1342px;top:198px;width:11px;height:351px;border-radius:6px;background:linear-gradient(90deg,#a2a2a2,#7c7c7c)"></div>

<svg style="left:1188px;top:204px" width="17" height="16"><path d="M1 15l5-6" stroke="#eee" stroke-width="1.300"/><path d="M7 3l7 6-3 1-2 2-4-4 2-2z" fill="#eee" stroke="#333" stroke-width=".5"/></svg>
<svg style="left:1212px;top:204px" width="15" height="15"><use href="#scene" width="15" height="15"/></svg>
<div class="t" style="left:1231px;top:204px">Scene</div>
<div class="psep" style="top:229px"></div>
<div class="td" style="left:1191px;top:237px"></div>
<div class="t" style="left:1204px;top:234px;font-size:13px">Визуализация</div>
<div class="b dots" style="left:1320px;top:240px;width:10px;height:7px;background:radial-gradient(circle,#999 40%,transparent 45%) 0 0/3px 3px"></div>

<div class="lt" style="left:1188px;top:262px;width:47px;height:20px;border-radius:5px 0 0 5px"></div>
<div class="lt" style="left:1234px;top:262px;width:49px;height:20px"></div>
<div class="lt" style="left:1282px;top:262px;width:51px;height:20px;border-radius:0 5px 5px 0"></div>
<svg style="left:1190px;top:263px" width="17" height="17"><use href="#cam" width="16" height="16"/><path d="M14 0v5M11.500 2.500h5" stroke="#f0c828" stroke-width="1.500"/></svg>
<svg style="left:1236px;top:263px" width="17" height="17"><use href="#clap" width="16" height="16"/></svg>
<svg style="left:1286px;top:264px" width="15" height="15"><path d="M1 5h3l4-4v13l-4-4H1z" fill="#ddd" stroke="#333" stroke-width=".5"/><path d="M10 4a5 5 0 0 1 0 7M12 2a8 8 0 0 1 0 11" stroke="#5b8bd0" fill="none"/></svg>
<div class="t" style="left:1206px;top:265px;font-size:12px">Визу</div><div class="t" style="left:1252px;top:265px;font-size:12px">Аним</div><div class="t" style="left:1300px;top:265px;width:33px;overflow:hidden;font-size:12px">Аудио</div>
<div class="t" style="left:1194px;top:290px;font-size:12px">Отобра</div>
<div class="dk" style="left:1240px;top:287px;width:74px;height:19px;border-radius:4px 0 0 4px"></div>
<div class="t w" style="left:1248px;top:290px;font-size:12px">Редакто...</div>
<svg style="left:1303px;top:290px;color:#c4c4c4" width="8" height="14"><use href="#ud" width="8" height="14"/></svg>
<div class="lt" style="left:1313px;top:287px;width:20px;height:19px;border-radius:0 4px 4px 0"></div>
<svg style="left:1317px;top:289px" width="12" height="15"><rect x="1" y="7" width="10" height="7" fill="#eee" stroke="#333" stroke-width=".7"/><path d="M3 7V4a3 3 0 0 1 6 0" fill="none" stroke="#eee" stroke-width="1.400"/></svg>
<div class="psep" style="top:314px"></div>
<div class="td" style="left:1191px;top:322px"></div>
<div class="t" style="left:1204px;top:319px;font-size:13px">Размеры</div>
<div class="b" style="left:1320px;top:325px;width:10px;height:7px;background:radial-gradient(circle,#999 40%,transparent 45%) 0 0/3px 3px"></div>

<div class="dk" style="left:1187px;top:347px;width:107px;height:19px;border-radius:4px 0 0 4px"></div>
<div class="t w" style="left:1194px;top:350px;font-size:12px">Предус…изаци</div>
<svg style="left:1284px;top:350px;color:#c4c4c4" width="8" height="14"><use href="#ud" width="8" height="14"/></svg>
<div class="lt" style="left:1293px;top:347px;width:21px;height:19px"></div>
<div class="lt" style="left:1313px;top:347px;width:20px;height:19px;border-radius:0 4px 4px 0"></div>
<svg style="left:1298px;top:351px" width="11" height="11"><path d="M5.500 0v11M0 5.500h11" stroke="#f2f2f2" stroke-width="2.400"/></svg>
<svg style="left:1318px;top:351px" width="10" height="11"><path d="M0 5.500h10" stroke="#f2f2f2" stroke-width="2.400"/></svg>

<div class="t" style="left:1194px;top:375px">Разрешен…</div>
<div class="t" style="left:1272px;top:375px">Диапазон…</div>
<div class="nf" style="left:1187px;top:392px;width:68px;height:20px;border-radius:8px 8px 0 0">1920 р<i class="l">◂</i><i class="r">▸</i></div>
<div class="nf" style="left:1187px;top:412px;width:68px;height:20px">1080 р<i class="l">◂</i><i class="r">▸</i></div>
<div class="nf" style="left:1187px;top:431px;width:68px;height:20px;border-radius:0 0 8px 8px;background:linear-gradient(90deg,#6a6a6a 0 55%,#b0b0b0 55%);line-height:19px">50%</div>
<div class="nf" style="left:1264px;top:392px;width:69px;height:20px;border-radius:8px 8px 0 0">Нач. :1<i class="l">◂</i><i class="r">▸</i></div>
<div class="nf" style="left:1264px;top:412px;width:69px;height:20px">К:&nbsp; 250<i class="l">◂</i><i class="r">▸</i></div>
<div class="nf" style="left:1264px;top:431px;width:69px;height:20px;border-radius:0 0 8px 8px">Шаг :1<i class="l">◂</i><i class="r">▸</i></div>
<div class="t" style="left:1194px;top:454px">Соотн. сто</div>
<div class="t" style="left:1272px;top:454px">Частота к…</div>
<div class="nf" style="left:1187px;top:472px;width:68px;height:20px;border-radius:8px 8px 0 0">: 1.000<i class="l">◂</i><i class="r">▸</i></div>
<div class="nf" style="left:1187px;top:492px;width:68px;height:20px;border-radius:0 0 8px 8px">: 1.000<i class="l">◂</i><i class="r">▸</i></div>
<div class="dk" style="left:1264px;top:472px;width:69px;height:19px"></div>
<div class="t w" style="left:1272px;top:474px">24 fps</div>
<svg style="left:1323px;top:475px;color:#c4c4c4" width="8" height="14"><use href="#ud" width="8" height="14"/></svg>
<div class="t" style="left:1272px;top:494px">Перерасп…</div>
<div class="nf" style="left:1264px;top:512px;width:69px;height:20px;border-radius:9px"><i class="l">◂</i><i class="r">▸</i><span style="position:absolute;left:33px;top:-1px;height:20px;border-left:1px solid #333"></span><i style="position:absolute;left:23px">▸</i><i style="position:absolute;left:37px">◂</i><span style="position:absolute;left:46px">1</span></div>
<div class="dk" style="left:1190px;top:516px;width:14px;height:14px"></div>
<div class="dk" style="left:1228px;top:516px;width:14px;height:14px;background:#5e5e5e"></div>
<div class="psep" style="top:540px"></div>
<div class="td" style="left:1191px;top:549px"></div>
<div class="dk" style="left:1204px;top:545px;width:15px;height:15px;background:#565656"></div>
<svg style="left:1206px;top:546px" width="12" height="12"><path d="M1 6l3.500 4L11 1" fill="none" stroke="#eee" stroke-width="2"/></svg>
<div class="t" style="left:1224px;top:546px;font-size:13px">Сглаживание</div>
<div class="b" style="left:1320px;top:551px;width:10px;height:7px;background:radial-gradient(circle,#999 40%,transparent 45%) 0 0/3px 3px"></div>
<div class="dk t w" style="left:1187px;top:573px;width:18px;height:19px;border-radius:4px 0 0 4px;text-align:center;line-height:17px;font-size:12px">5</div>
<div class="b" style="left:1204px;top:573px;width:17px;height:19px;background:#5680c2;border:1px solid #333;text-align:center;line-height:17px;color:#111;font-size:12px">8</div>
<div class="dk t w" style="left:1220px;top:573px;width:18px;height:19px;border-radius:0;text-align:center;line-height:17px;font-size:12px">11</div>
<div class="dk t w" style="left:1237px;top:573px;width:18px;height:19px;border-radius:0 4px 4px 0;text-align:center;line-height:17px;font-size:12px">16</div>
<div class="dk" style="left:1264px;top:573px;width:69px;height:19px"></div>
<div class="t w" style="left:1272px;top:576px;font-size:12px">Митчелл</div>
<svg style="left:1323px;top:576px;color:#c4c4c4" width="8" height="14"><use href="#ud" width="8" height="14"/></svg>
<div class="dk" style="left:1190px;top:598px;width:14px;height:14px"></div>
<div class="t" style="left:1212px;top:599px;font-size:12px">Все сэм</div>
<div class="nf" style="left:1264px;top:596px;width:69px;height:20px;border-radius:9px">1.000 р<i class="l">◂</i><i class="r">▸</i></div>
<div class="psep" style="top:623px"></div>
<div class="tr" style="left:1192px;top:630px"></div>
<div class="dk" style="left:1204px;top:628px;width:15px;height:15px;background:#565656"></div>
<div class="t" style="left:1224px;top:629px;font-size:13px;width:117px;overflow:hidden">Размытие при движ</div>
<div class="psep" style="top:647px"></div>
<div class="tr" style="left:1192px;top:654px"></div>
<div class="t" style="left:1204px;top:653px;font-size:13px">Затенение</div>
<div class="b" style="left:1320px;top:657px;width:10px;height:7px;background:radial-gradient(circle,#999 40%,transparent 45%) 0 0/3px 3px"></div>
<div class="psep" style="top:671px"></div>
<div class="tr" style="left:1192px;top:678px"></div>
<div class="t" style="left:1204px;top:677px;font-size:13px">Производительность</div>
<div class="psep" style="top:695px"></div>
<div class="tr" style="left:1192px;top:702px"></div>
<div class="t" style="left:1204px;top:701px;font-size:13px">Постобработка</div>
<div class="b" style="left:1320px;top:705px;width:10px;height:7px;background:radial-gradient(circle,#999 40%,transparent 45%) 0 0/3px 3px"></div>
<div class="psep" style="top:719px"></div>
<svg style="left:1176px;top:706px" width="13" height="13"><use href="#hatchl" width="13" height="13"/></svg>
<div class="b" style="left:1358px;top:0;width:1px;height:721px;background:#0a78d4"></div>
<div class="b" style="left:7px;top:720px;width:1352px;height:1px;background:#0a78d4"></div>

<!-- activation watermark -->
<div class="t" style="left:1007px;top:633px;height:22px;line-height:22px;font-size:20px;color:rgba(255,255,255,.3)">Активация Windows</div>
<div class="t" style="left:1007px;top:658px;font-size:15px;color:rgba(255,255,255,.3)">Чтобы активировать Windows, перейдите в</div>
<div class="t" style="left:1007px;top:679px;font-size:15px;color:rgba(255,255,255,.3)">раздел "Параметры".</div>

<!-- taskbar -->
<div class="b" style="left:0;top:728px;width:1366px;height:40px;background:#04090f"></div>
<div class="b" style="left:344px;top:728px;width:48px;height:40px;background:#3a3d42"></div>
<div class="b" style="left:299px;top:766px;width:40px;height:2px;background:#76b9ed"></div>
<div class="b" style="left:344px;top:766px;width:48px;height:2px;background:#76b9ed"></div>
<svg style="left:16px;top:740px" width="16" height="16"><path d="M0 2.300l7-1v6.300H0zM8 1.100l8-1.100v7.600H8zM0 8.600h7v6.300l-7-1zM8 8.600h8V16l-8-1.100z" fill="#fff"/></svg>
<svg style="left:64px;top:740px" width="16" height="16"><circle cx="10" cy="6" r="5" fill="none" stroke="#fff" stroke-width="1.300"/><path d="M6.500 9.500L1 15" stroke="#fff" stroke-width="1.600"/></svg>
<svg style="left:113px;top:737px" width="21" height="21"><path d="M1 11C1 4 6 0 11 0c6 0 10 4 9.500 12H7c.5 4 6 5.500 12 2.500v5c-8 3.500-18 1-18-8.500zM7 8h8c0-4-7-4-8 0z" fill="#0c78d6"/></svg>
<svg style="left:161px;top:738px" width="21" height="20"><path d="M0 1h8l2 2h11v16H0z" fill="#f7d774"/><path d="M0 1h8l2 2H0z" fill="#d8b54a"/><path d="M7 12l3.500-3 3.500 3v7H7z" fill="#3aa0e0"/><path d="M0 5h21v1.500H0z" fill="#fff3c2"/></svg>
<svg style="left:209px;top:738px" width="24" height="19"><path d="M0 7L12 0l12 7v12H0z" fill="#fff"/><path d="M3 6.500L12 1.500l9 5 3 6L13 8z" fill="#04090f"/></svg>
<svg style="left:258px;top:736px" width="23" height="24"><path d="M7 6V4a4.500 4.500 0 0 1 9 0v2" fill="none" stroke="#ddd" stroke-width="1.200"/><rect x="0" y="6" width="23" height="18" rx="1" fill="#fff"/><rect x="6" y="9" width="5" height="5" fill="#f25022"/><rect x="12" y="9" width="5" height="5" fill="#7fba00"/><rect x="6" y="15" width="5" height="5" fill="#00a4ef"/><rect x="12" y="15" width="5" height="5" fill="#ffb900"/></svg>
<svg style="left:307px;top:737px" width="22" height="22"><circle cx="11" cy="11" r="11" fill="#db4437"/><path d="M11 11L1.500 5.500A11 11 0 0 0 6 20.500z" fill="#0f9d58"/><path d="M21 6.500A11 11 0 0 1 6 20.800L11 11z" fill="#ffcd40"/><path d="M11 0A11 11 0 0 1 21 6.500H11z" fill="#db4437"/><circle cx="11" cy="11" r="5" fill="#fff"/><circle cx="11" cy="11" r="3.800" fill="#4285f4"/></svg>
<svg style="left:356px;top:736px" width="24" height="24"><use href="#blend" width="24" height="24"/></svg>

<svg style="left:1084px;top:739px" width="16" height="18"><circle cx="11" cy="4" r="2.700" fill="none" stroke="#fff"/><circle cx="5" cy="7.500" r="2.700" fill="none" stroke="#fff"/><path d="M1 15c0-4 7-4 8 0M9 8c3-1 6 0 6.500 3" fill="none" stroke="#fff"/></svg>
<svg style="left:1121px;top:744px" width="13" height="8"><path d="M.5 7L6.500 1l6 6" fill="none" stroke="#fff" stroke-width="1.200"/></svg>
<svg style="left:1143px;top:741px" width="16" height="14"><rect x="5" y="3" width="10" height="8" fill="none" stroke="#fff"/><rect x="6.500" y="4.500" width="7" height="5" fill="#fff"/><path d="M0 4h4v3H0zM2 7v3h3M1 1v3M3 1v3" stroke="#fff" fill="none"/></svg>
<svg style="left:1169px;top:741px" width="14" height="14"><path d="M1 13a12 12 0 0 1 12-12M4 13a9 9 0 0 1 9-9M7 13a6 6 0 0 1 6-6" fill="none" stroke="#999"/><circle cx="11.500" cy="11.500" r="1.600" fill="#fff"/></svg>
<svg style="left:1190px;top:741px" width="17" height="14"><path d="M1 5h3l4-4v12l-4-4H1z" fill="none" stroke="#fff"/><path d="M10.500 4.500a4 4 0 0 1 0 5" stroke="#fff" fill="none"/><path d="M12.500 2.500a7 7 0 0 1 0 9" stroke="#888" fill="none"/></svg>
<div class="t" style="left:1218px;top:741px;color:#fff;font-size:12px">РУС</div>
<div class="t" style="left:1240px;top:732px;width:78px;text-align:center;color:#fff;font-size:12px">0:44</div>
<div class="t" style="left:1240px;top:749px;width:80px;text-align:center;color:#fff;font-size:12px">19.06.2018</div>
<svg style="left:1325px;top:739px" width="26" height="26"><path d="M0 0h16v12H7l-3 3v-3H0z" fill="#fff"/><path d="M3 3h10M3 6h10M3 9h7" stroke="#04090f"/><circle cx="15" cy="15" r="8" fill="#4c4c4c"/></svg>
<div class="t" style="left:1337px;top:747px;color:#fff;font-size:11px;font-weight:bold">1</div>

<script>
(function(){
var k=.0518,m=.02176,g=document.getElementById('grid'),NS='http://www.w3.org/2000/svg';
function p(X,Y){var w=1-k*X+m*Y;return [672+(14.5*X+32.7*Y)/w,343+(14.43*X-6.9*Y)/w];}
function l(a,b){var e=document.createElementNS(NS,'line');e.setAttribute('x1',a[0]);e.setAttribute('y1',a[1]);e.setAttribute('x2',b[0]);e.setAttribute('y2',b[1]);g.appendChild(e);}
for(var i=-8;i<=8;i++){if(i){l(p(i,-8),p(i,8));l(p(-8,i),p(8,i));}}
})();
</script>
</body></html>
